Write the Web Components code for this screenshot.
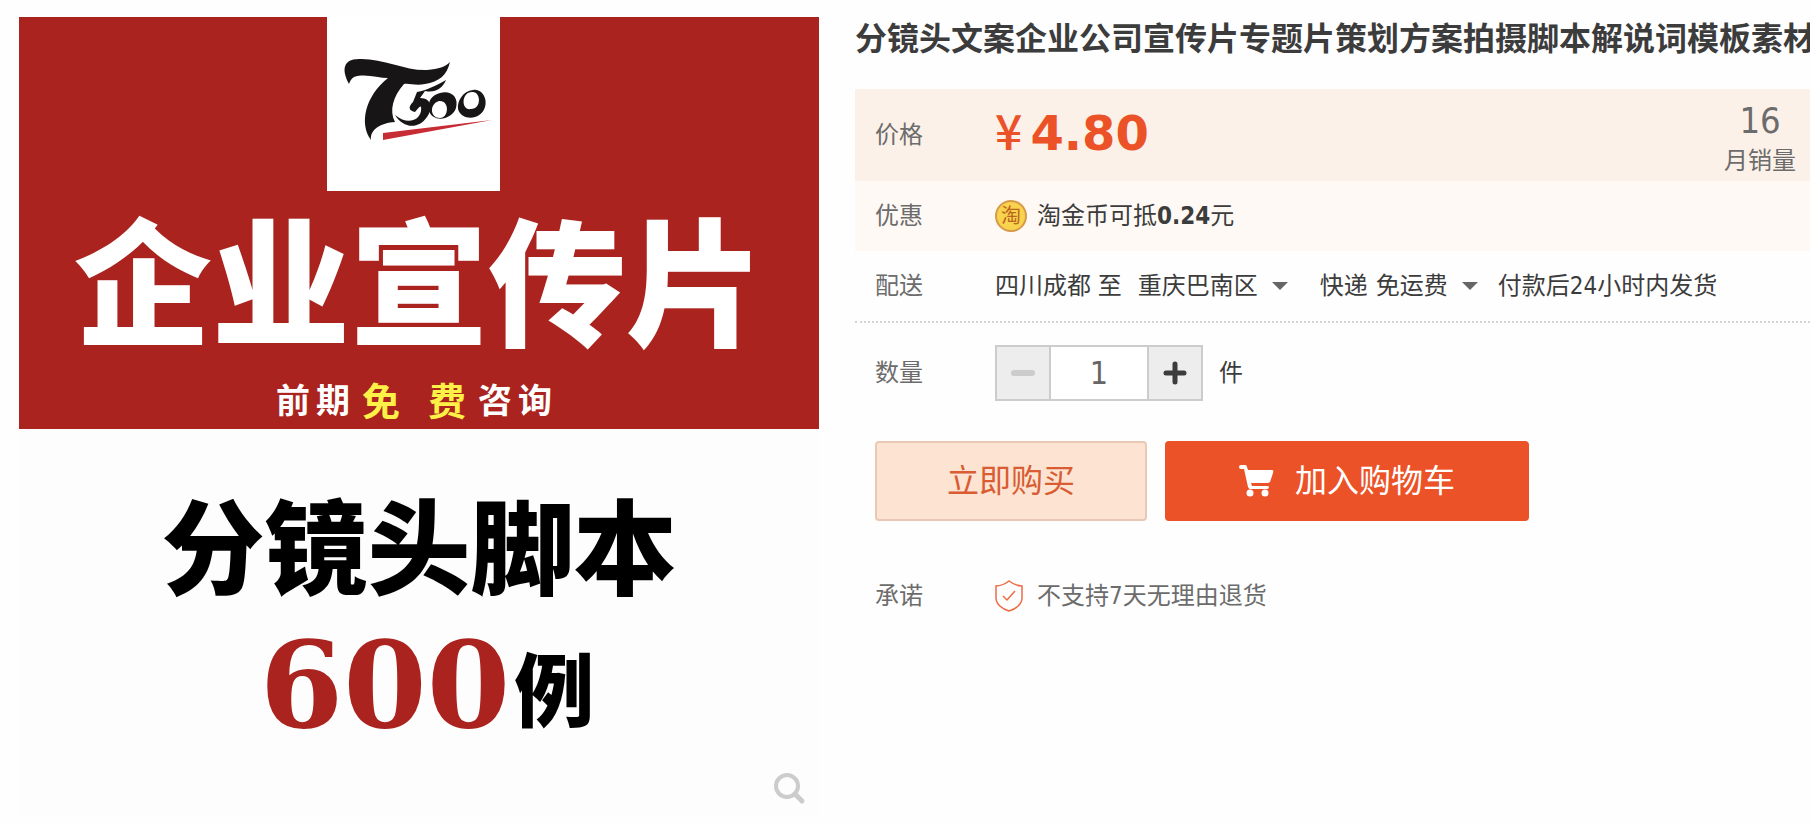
<!DOCTYPE html>
<html lang="zh-CN">
<head>
<meta charset="utf-8">
<title>分镜头文案企业公司宣传片</title>
<style>
body {
  margin: 0;
  background: #fefefe;
  color: #3c3c3c;
  font-family: "DejaVu Sans Condensed", "Noto Sans CJK SC", sans-serif;
  font-size: 24px;
  line-height: 32px;
}
</style>
</head>
<body>
<product-page>
  <product-poster slot="gallery"></product-poster>
  <h1 slot="title">分镜头文案企业公司宣传片专题片策划方案拍摄脚本解说词模板素材</h1>
  <info-row tone="price" label="价格">
    <price-tag>4.80</price-tag>
    <sales-count slot="end" label="月销量">16</sales-count>
  </info-row>
  <info-row tone="promo" label="优惠">
    <gold-coin>淘</gold-coin>
    <span>淘金币可抵<b>0.24</b>元</span>
  </info-row>
  <info-row tone="delivery" label="配送">
    <delivery-info></delivery-info>
  </info-row>
  <info-row tone="quantity" label="数量">
    <quantity-stepper></quantity-stepper>
    <span>件</span>
  </info-row>
  <buy-actions></buy-actions>
  <info-row tone="promise" label="承诺">
    <shield-icon></shield-icon>
    <span>不支持7天无理由退货</span>
  </info-row>
</product-page>

<script>
function define(name, html, setup) {
  let template = document.createElement("template")
  template.innerHTML = html
  customElements.define(name, class extends HTMLElement {
    constructor() {
      super()
      this.attachShadow({mode: "open"})
      this.shadowRoot.appendChild(template.content.cloneNode(true))
    }
    connectedCallback() {
      let $label = this.shadowRoot.querySelector(".label")
      if ($label) $label.textContent = this.getAttribute("label")
      if (setup) setup(this.shadowRoot)
    }
  })
}

define("product-page", `
<style>
:host {
  display: grid;
  grid-template-columns: minmax(0, 800fr) minmax(0, 955fr);
  column-gap: 36px;
  align-items: start;
  padding: 17px 0 0 19px;
}
.detail {
  overflow: hidden;
}
::slotted(h1) {
  margin: 0 0 28px;
  font-size: 32px;
  line-height: 44px;
  white-space: nowrap;
}
</style>
<slot name="gallery"></slot>
<main class="detail">
  <slot name="title"></slot>
  <slot></slot>
</main>`)

define("product-poster", `
<style>
:host {
  display: block;
  position: relative;
  aspect-ratio: 1;
  overflow: hidden;
  background: #fdfdfd;
  color: #000;
  font-family: "Noto Sans CJK SC", sans-serif;
  font-weight: 900;
  text-align: center;
  white-space: nowrap;
}
.top {
  height: 412px;
  background: #aa231e;
  color: #fff;
}
.logo {
  display: block;
  width: 173px;
  height: 174px;
  margin-left: 308px;
  background: #fff;
}
h2, h3, p {
  margin: 0;
}
h2 {
  padding-top: 14px;
  font-size: 138px;
  font-weight: 900;
  line-height: 140px;
}
.free {
  display: flex;
  justify-content: center;
  gap: 6px;
  padding: 32px 10px 0 0;
  font-size: 34px;
  font-weight: 700;
  line-height: 44px;
}
.free em {
  display: flex;
  gap: 28px;
  padding: 0 6px;
  color: #fdf148;
  font-size: 38px;
  font-style: normal;
}
h3 {
  padding-top: 60px;
  font-size: 103px;
  font-weight: 900;
  line-height: 108px;
}
.count {
  display: flex;
  justify-content: center;
  align-items: center;
  gap: 4px;
  padding: 26px 0 0 16px;
  font-size: 80px;
  line-height: 124px;
}
.count b {
  color: #aa231e;
  font-family: "DejaVu Serif", serif;
  font-size: 120px;
  font-weight: 700;
}
.zoom {
  position: absolute;
  right: 12px;
  bottom: 12px;
  padding: 0;
  border: 0;
  background: none;
}
.zoom svg {
  display: block;
}
</style>
<div class="top">
  <svg class="logo" viewBox="0 0 173 174">
    <path fill="#171516" d="M22 67C15 54 15 42 32 42C55 41 79 54 100 53C112 52 118 50 123 45C120 58 112 65 98 67C89 69 82 66 77 67C66 79 62 94 68 105C54 106 43 112 44 123C32 107 38 79 61 61C51 61 38 56 27 60C24 62 23 64 22 67Z"/>
    <path fill="#171516" d="M119 63C115 72 108 76 98 74L93 81C105 81 106 92 100 100C91 113 76 111 68 98C80 108 92 104 94 94C95 86 92 90 88 95C83 94 80 91 86 85L90 75C100 73 108 69 119 63Z"/>
    <path fill="#171516" fill-rule="evenodd" d="M113 76C124 73 132 80 129 91C125 103 106 106 102 94C100 84 105 78 113 76ZM112 84C102 87 103 101 113 101C122 101 123 83 112 84ZM146 73C154 71 161 81 158 90C154 104 134 104 131 92C130 84 136 74 146 73ZM145 75C134 75 134 94 144 92C155 92 154 74 145 75Z"/>
    <path fill="#c72c35" d="M56 116V123L165 103Z"/>
  </svg>
  <h2>企业宣传片</h2>
  <p class="free"><span>前</span><span>期</span><em><span>免</span><span>费</span></em><span>咨</span><span>询</span></p>
</div>
<h3>分镜头脚本</h3>
<p class="count"><b>600</b><span>例</span></p>
<button class="zoom" type="button" aria-label="放大图片">
  <svg width="36" height="36" viewBox="0 0 36 36" fill="none" stroke="#ccc">
    <circle cx="16" cy="17" r="11" stroke-width="4"/>
    <path d="M24 25L31 32" stroke-width="5" stroke-linecap="round"/>
  </svg>
</button>`)

define("info-row", `
<style>
:host {
  display: flex;
  align-items: center;
  box-sizing: border-box;
  min-height: 70px;
  padding: 0 14px 0 20px;
  white-space: nowrap;
}
:host([tone="price"]) {
  min-height: 92px;
  background: #fcf1e8;
}
:host([tone="promo"]) {
  background: #fff9f5;
}
:host([tone="delivery"]) {
  min-height: 72px;
  border-bottom: 2px dotted #d4d4d4;
}
:host([tone="quantity"]) {
  min-height: 100px;
}
:host([tone="promise"]) {
  margin-top: 40px;
  color: #6c6c6c;
}
.label {
  flex: none;
  width: 120px;
  color: #6c6c6c;
}
.value {
  display: flex;
  flex: 1;
  align-items: center;
}
:host([tone="promo"]) .value, :host([tone="promise"]) .value {
  gap: 10px;
}
:host([tone="quantity"]) .value {
  gap: 16px;
}
</style>
<span class="label"></span>
<div class="value"><slot></slot></div>
<slot name="end"></slot>`)

define("price-tag", `
<style>
:host {
  display: flex;
  align-items: baseline;
  gap: 8px;
  padding-bottom: 8px;
  color: #ec5228;
  font-size: 48px;
  line-height: 56px;
}
.unit {
  font-family: "Noto Sans CJK SC", sans-serif;
  font-weight: 500;
}
b {
  font-family: "DejaVu Sans", sans-serif;
}
</style>
<span class="unit">¥</span><b><slot></slot></b>`)

define("sales-count", `
<style>
:host {
  display: flex;
  flex-direction: column;
  align-items: center;
  padding-top: 4px;
  color: #6c6c6c;
}
.num {
  font-size: 36px;
  line-height: 48px;
}
</style>
<span class="num"><slot></slot></span>
<span class="label"></span>`)

define("gold-coin", `
<style>
:host {
  display: flex;
  align-items: center;
  justify-content: center;
  box-sizing: border-box;
  width: 32px;
  height: 32px;
  border: 2px solid #d69a48;
  border-radius: 50%;
  background: #f9d24e;
  color: #b9661f;
  font-size: 20px;
  line-height: 28px;
}
</style>
<slot></slot>`)

define("shield-icon", `
<style>
:host, svg {
  display: block;
}
:host {
  width: 32px;
}
</style>
<svg width="28" height="32" viewBox="0 0 28 32" fill="none" stroke="#ec6b43" stroke-width="1.5">
  <path d="M14 1C10 4 6 6 1 6V18C1 24 7 29 14 31C21 29 27 24 27 18V6C22 6 18 4 14 1Z"/>
  <path d="M8 16L12 20L20 11"/>
</svg>`)

define("delivery-info", `
<style>
:host {
  display: flex;
  align-items: center;
}
label {
  display: flex;
  align-items: center;
}
select {
  appearance: none;
  padding: 0;
  border: 0;
  background: none;
  color: inherit;
  font: inherit;
}
svg {
  margin: 0 20px 0 14px;
}
.city {
  gap: 16px;
  margin-right: 12px;
}
.post {
  gap: 8px;
}
</style>
<label class="city">
  <span>四川成都 至</span>
  <span><select><option>重庆巴南区</option></select><svg width="16" height="12" viewBox="0 0 16 12"><path d="M0 0H16L8 8Z" fill="#666"/></svg></span>
</label>
<label class="post">
  <span>快递</span>
  <span><select><option>免运费</option></select><svg width="16" height="12" viewBox="0 0 16 12"><path d="M0 0H16L8 8Z" fill="#666"/></svg></span>
</label>
<span>付款后24小时内发货</span>`)

define("quantity-stepper", `
<style>
:host {
  display: flex;
  box-sizing: border-box;
  height: 56px;
  border: 2px solid #ccc;
}
button {
  display: flex;
  align-items: center;
  justify-content: center;
  width: 52px;
  padding: 0;
  border: 0;
  background: #ededed;
  color: #3c3c3c;
}
button:disabled {
  color: #ccc;
}
input {
  box-sizing: border-box;
  width: 100px;
  padding: 0;
  border: solid #ccc;
  border-width: 0 2px;
  background: #fff;
  color: #666;
  font: inherit;
  font-size: 32px;
  text-align: center;
}
</style>
<button class="minus" type="button" aria-label="减少" disabled>
  <svg width="24" height="24" stroke="currentColor" stroke-width="6" stroke-linecap="round"><path d="M3 12H21"/></svg>
</button>
<input type="text" inputmode="numeric" value="1" aria-label="数量">
<button class="plus" type="button" aria-label="增加">
  <svg width="24" height="24" stroke="currentColor" stroke-width="5" stroke-linecap="round"><path d="M3 12H21M12 3V21"/></svg>
</button>`, root => {
  let $input = root.querySelector("input")
  let $minus = root.querySelector(".minus")
  let change = step => {
    $input.value = Math.max(1, (parseInt($input.value) || 1) + step)
    $minus.disabled = $input.value === "1"
  }
  $minus.addEventListener("click", () => change(-1))
  root.querySelector(".plus").addEventListener("click", () => change(1))
  $input.addEventListener("change", () => change(0))
})

define("buy-actions", `
<style>
:host {
  display: flex;
  gap: 18px;
  padding: 18px 20px 0;
}
button {
  display: flex;
  align-items: center;
  justify-content: center;
  gap: 20px;
  box-sizing: border-box;
  height: 80px;
  padding: 0 72px;
  border: 2px solid #ec5228;
  border-radius: 4px;
  background: #ec5228;
  color: #fff;
  font: inherit;
  font-size: 32px;
}
.buy {
  padding: 0 70px;
  border-color: #e9c9b5;
  background: #fce3d2;
  color: #d95c33;
}
</style>
<button class="buy" type="button">立即购买</button>
<button class="cart" type="button">
  <svg width="36" height="32" viewBox="0 0 36 32" fill="#fff">
    <path d="M2 0H6Q8 0 8 2L9 5H33Q35 5 34 8L31 17Q30 18 28 18H12L13 21H28Q30 21 30 22Q30 24 28 24H11Q10 24 9 22L5 4H2Q0 4 0 2Q0 0 2 0Z"/>
    <circle cx="11" cy="28" r="3.5"/>
    <circle cx="26" cy="28" r="3.5"/>
  </svg>
  加入购物车
</button>`)
</script>
</body>
</html>
